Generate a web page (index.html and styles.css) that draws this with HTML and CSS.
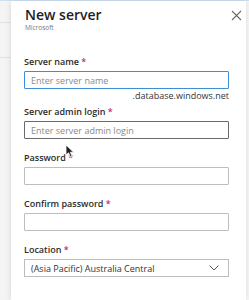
FILE: index.html
```html
<!DOCTYPE html>
<html lang="en">
<head>
    <meta charset="UTF-8">
    <title>New server</title>
    <link rel="stylesheet" href="styles.css">
</head>
<body>
    <div class="page">
        <div class="side">
            <div class="side-row"></div>
            <div class="side-row"></div>
        </div>

        <div class="panel">
            <div class="panel-header">
                <div>
                    <h1>New server</h1>
                    <p class="publisher">Microsoft</p>
                </div>
                <svg class="close" width="11" height="11" viewBox="0 0 11 11" fill="none" stroke="#6b6b6b" stroke-width="1.1">
                    <path d="M1 1L10 10M10 1L1 10"/>
                </svg>
            </div>

            <form class="form">
                <div class="form-group">
                    <label for="name">Server name <span class="req">*</span></label>
                    <input type="text" id="name" class="focused" placeholder="Enter server name">
                    <div class="suffix">.database.windows.net</div>
                </div>

                <div class="form-group">
                    <label for="login">Server admin login <span class="req">*</span></label>
                    <input type="text" id="login" class="hovered" placeholder="Enter server admin login">
                </div>

                <div class="form-group">
                    <label for="password">Password <span class="req">*</span></label>
                    <input type="password" id="password">
                </div>

                <div class="form-group">
                    <label for="confirm">Confirm password <span class="req">*</span></label>
                    <input type="password" id="confirm">
                </div>

                <div class="form-group">
                    <label>Location <span class="req">*</span></label>
                    <div class="select">
                        <span>(Asia Pacific) Australia Central</span>
                        <svg width="10" height="6" viewBox="0 0 10 6" fill="none" stroke="#555" stroke-width="1">
                            <path d="M0.5 0.5L5 5L9.5 0.5"/>
                        </svg>
                    </div>
                </div>
            </form>

            <svg class="cursor" width="10" height="14" viewBox="0 0 10 14">
                <path d="M1 1L1 11L3.5 8.8L5.3 12.8L7 12L5.3 8.2L8.6 8.2Z" fill="#222" stroke="#fff" stroke-width="0.8"/>
            </svg>
        </div>

        <div class="edge"></div>
    </div>
</body>
</html>
```

FILE: styles.css
```css
* {
    margin: 0;
    padding: 0;
    box-sizing: border-box;
    font-family: 'Open Sans', 'Noto Sans', sans-serif;
}

body {
    background: #f4f4f4;
}

.page {
    display: flex;
    height: 300px;
    border-top: 1px solid #cfe0f1;
}

.side {
    width: 11px;
    padding-top: 21px;
}

.side-row {
    height: 35px;
    border-top: 1px solid #e2e2e2;
}

.panel {
    width: 235px;
    background: white;
    box-shadow: 0 0 6px rgba(0, 0, 0, 0.12);
    padding: 0 17px 0 13px;
    position: relative;
}

.edge {
    flex: 1;
    background: #f7f7f7;
}

.panel-header {
    display: flex;
    justify-content: space-between;
    align-items: flex-start;
    padding-top: 5px;
}

.panel-header h1 {
    font-size: 14px;
    font-weight: 600;
    color: #1f1f1f;
    line-height: 17px;
    margin-left: 1px;
}

.publisher {
    font-size: 6.5px;
    color: #777;
    margin-left: 1px;
}

.close {
    margin-top: 4px;
    margin-right: -13px;
}

.form {
    margin-top: 24px;
}

.form-group {
    margin-bottom: 13px;
}

.form-group label {
    display: block;
    font-size: 9px;
    font-weight: 600;
    color: #2b2b2b;
    line-height: 12px;
    margin-bottom: 3px;
}

.req {
    color: #c4314b;
}

.form-group input {
    display: block;
    width: 100%;
    height: 18px;
    border: 1px solid #bdbdbd;
    border-radius: 1px;
    padding: 0 6px;
    font-size: 9px;
    color: #333;
    background: white;
}

.form-group input::placeholder {
    color: #8a8a8a;
}

.form-group input.focused {
    border-color: #3c8fd6;
}

.form-group input.hovered {
    border-color: #6a6a6a;
}

.suffix {
    text-align: right;
    font-size: 9px;
    color: #333;
    line-height: 12px;
    margin-top: 1px;
    margin-bottom: -9px;
}

.select {
    display: flex;
    justify-content: space-between;
    align-items: center;
    height: 18px;
    border: 1px solid #bdbdbd;
    padding: 0 9px 0 6px;
    font-size: 9px;
    color: #333;
}

.cursor {
    position: absolute;
    left: 54px;
    top: 143px;
}
```
